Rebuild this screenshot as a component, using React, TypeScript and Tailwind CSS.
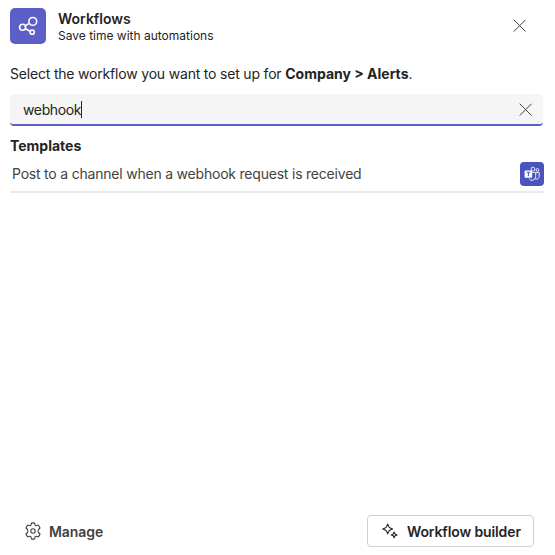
import React from 'react';

function CloseIcon() {
  return (
    <svg className="block h-[13px] w-[13px]" viewBox="0 0 13 13" fill="none" stroke="#424242" strokeWidth="1" strokeLinecap="round">
      <path d="M1 1 12.3 12.3M12.3 1 1 12.3" />
    </svg>
  );
}

function WorkflowsLogo() {
  return (
    <div className="h-9 w-9 shrink-0 rounded-[5px] bg-[#5b5fc7]">
      <svg className="block h-9 w-9" viewBox="0 0 36 36" fill="none" stroke="#fff" strokeWidth="1.6">
        <circle cx="22.8" cy="13.4" r="3.9" />
        <circle cx="12.6" cy="19.3" r="3" />
        <circle cx="22.2" cy="24.2" r="2.1" />
        <path d="M15.2 17.7 19.4 15.4M15.3 20.8 20.3 23.3" />
      </svg>
    </div>
  );
}

function TeamsLogo() {
  return (
    <svg className="block h-6 w-6 shrink-0" viewBox="0 0 24 24" fill="none">
      <rect width="24" height="24" rx="4" fill="#4b53bc" />
      <g stroke="#e6e7fa" strokeWidth="1">
        <circle cx="12.9" cy="7.1" r="1.9" />
        <circle cx="17.4" cy="8" r="1.4" />
        <path d="M12.3 10.4H15.7V14.8A3.6 3.6 0 0 1 9 16.6" />
        <path d="M15.7 10.6H19.2V14.5A2.8 2.8 0 0 1 15.5 17" />
      </g>
      <rect x="4.6" y="8.4" width="7.6" height="7.4" rx="0.7" fill="#fff" />
      <path d="M6.6 10.3H10.2M8.4 10.3V14.1" stroke="#4b53bc" strokeWidth="1" />
    </svg>
  );
}

function GearIcon() {
  return (
    <svg className="block h-[18px] w-[18px]" viewBox="0 0 18 18" fill="none" stroke="#424242" strokeWidth="1.1" strokeLinejoin="round">
      <path d="M7.4 1.1Q9 .7 10.6 1.1L11 3.1Q11.4 3.9 12.3 3.8L14.2 3.1Q15.5 4.3 16 6L14.5 7.5Q13.6 9 14.5 10.5L16 12Q15.5 13.7 14.2 14.9L12.3 14.2Q11.3 14.1 11 14.9L10.6 16.9Q9 17.3 7.4 16.9L7 14.9Q6.7 14.1 5.7 14.2L3.8 14.9Q2.5 13.7 2 12L3.5 10.5Q4.4 9 3.5 7.5L2 6Q2.5 4.3 3.8 3.1L5.7 3.8Q6.6 3.9 7 3.1Z" />
      <circle cx="9" cy="9" r="2.2" />
    </svg>
  );
}

function SparkleIcon() {
  return (
    <svg className="block h-4 w-4" viewBox="0 0 16 16" fill="none" stroke="#242424" strokeWidth="1.1" strokeLinejoin="round">
      <path d="M5.7 1.1 7 4Q7.3 4.5 7.8 4.8L10.6 6 7.8 7.2Q7.3 7.5 7 8L5.7 10.9 4.4 8Q4.1 7.5 3.6 7.2L.8 6 3.6 4.8Q4.1 4.5 4.4 4Z" />
      <path d="M12.1 9.1 13 11 15 11.9 13 12.8 12.1 14.8 11.2 12.8 9.2 11.9 11.2 11Z" />
    </svg>
  );
}

export default function App() {
  return (
    <main className="flex h-[555px] w-[555px] flex-col overflow-hidden bg-white pl-[10px] font-['Inter',sans-serif] text-sm text-[#242424]">
      <header className="flex h-[52px] items-center gap-3 pr-[29px]">
        <WorkflowsLogo />
        <div className="flex flex-1 flex-col pt-[2px] whitespace-nowrap">
          <h1 className="text-[14px] leading-[18px] font-semibold">Workflows</h1>
          <p className="text-[12px] leading-4">Save time with automations</p>
        </div>
        <button aria-label="Close" className="pb-[2px]"><CloseIcon /></button>
      </header>

      <p className="mt-3 h-5 leading-5 tracking-[-0.19px] whitespace-nowrap">
        Select the workflow you want to set up for <strong className="font-bold tracking-normal">Company &gt; Alerts</strong>.
      </p>

      <div className="mt-[10px] flex h-8 w-[533px] items-center rounded-[4px] border-b-2 border-[#5b5fc7] bg-[#f5f5f5] pr-[11px] pl-[13px]">
        <span className="pt-px tracking-[-0.36px]">webhook</span>
        <span className="h-[17px] w-px bg-[#242424]" />
        <button aria-label="Clear" className="ml-auto"><CloseIcon /></button>
      </div>

      <h2 className="mt-[10px] h-5 leading-5 font-bold">Templates</h2>
      <div className="flex h-[37px] w-[534px] items-center justify-between border-b-2 border-[#ebebeb] pl-[2px] text-[#424242]">
        <span className="tracking-[-0.21px]">Post to a channel when a webhook request is received</span>
        <TeamsLogo />
      </div>

      <footer className="mt-auto mb-2 flex h-8 items-center justify-between pr-[21px] pl-[14px]">
        <button className="flex items-center gap-[7px] font-semibold text-[#424242]">
          <GearIcon />
          <span className="pt-px tracking-[-0.08px]">Manage</span>
        </button>
        <button className="flex h-8 w-[167px] items-center gap-[9px] rounded-[4px] border border-[#d1d1d1] pl-[14px] font-semibold whitespace-nowrap">
          <SparkleIcon />
          <span className="pt-px tracking-[-0.12px]">Workflow builder</span>
        </button>
      </footer>
    </main>
  );
}
